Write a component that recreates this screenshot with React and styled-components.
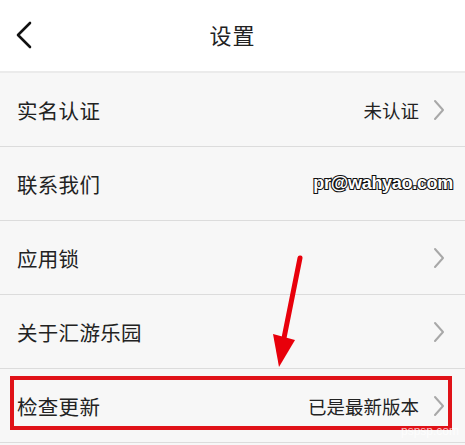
import React from 'react'
import styled, { createGlobalStyle } from 'styled-components'

const GlobalStyle = createGlobalStyle`
  html, body {
    margin: 0;
    padding: 0;
    background: #f7f7f7;
  }
  body {
    font-family: 'Noto Sans CJK SC', 'Noto Sans', sans-serif;
    color: #222;
  }
`

const Page = styled.div`
  position: relative;
  width: 465px;
  height: 445px;
  overflow: hidden;
  background: #f7f7f7;
`

const Header = styled.div`
  height: 71px;
  background: #fff;
  border-bottom: 2px solid #ebebeb;
  display: flex;
  align-items: center;
  justify-content: center;
  position: relative;
`

const BackButton = styled.div`
  position: absolute;
  left: 14px;
  top: 21px;
  width: 22px;
  height: 28px;
`

const Title = styled.h1`
  margin: 0 0 3px;
  font-size: 22px;
  font-weight: 400;
  letter-spacing: 1px;
  color: #222;
`

const List = styled.div`
  display: flex;
  flex-direction: column;
`

const Row = styled.div`
  position: relative;
  height: 73px;
  border-bottom: 1px solid #dcdcdc;
  display: flex;
  align-items: center;
  justify-content: space-between;
  padding: 0 20px 0 17px;
  background: #f7f7f7;
`

const Label = styled.span`
  font-size: 20.5px;
  letter-spacing: 0.3px;
  color: #222;
`

const Right = styled.div`
  display: flex;
  align-items: center;
  gap: 14px;
`

const Value = styled.span`
  font-size: 18.5px;
  color: #222;
`

const Email = styled.span`
  font-family: 'Liberation Sans', Arial, sans-serif;
  font-weight: 700;
  font-size: 18px;
  color: #fff;
  -webkit-text-stroke: 2.2px #111;
  paint-order: stroke fill;
  margin-right: -8px;
  letter-spacing: -0.3px;
`

const Highlight = styled.div`
  position: absolute;
  left: 10px;
  right: 13px;
  top: 7px;
  bottom: 12px;
  border: 4px solid #e01218;
  pointer-events: none;
`

const Watermark = styled.div`
  position: absolute;
  right: 6px;
  bottom: 4px;
  width: 140px;
  height: 52px;
  color: rgba(255, 255, 255, 0.75);
  font-family: 'Liberation Sans', Arial, sans-serif;
  font-size: 12px;
  display: flex;
  align-items: flex-end;
  justify-content: flex-end;
`

const Arrow = styled.svg`
  position: absolute;
  left: 0;
  top: 0;
  pointer-events: none;
`

const Chevron = () => (
  <svg width="12" height="22" viewBox="0 0 12 22">
    <path d="M2 2 L10 11 L2 20" fill="none" stroke="#a8a8a8" strokeWidth="2" strokeLinecap="round" strokeLinejoin="round" />
  </svg>
)

const rows = [
  { label: '实名认证', value: '未认证', arrow: true },
  { label: '联系我们', email: 'pr@wahyao.com' },
  { label: '应用锁', arrow: true },
  { label: '关于汇游乐园', arrow: true },
  { label: '检查更新', value: '已是最新版本', arrow: true, highlight: true },
]

export default function App () {
  return (
    <Page>
      <GlobalStyle />
      <Header>
        <BackButton>
          <svg width="22" height="28" viewBox="0 0 22 28">
            <path d="M16 2 L4 14 L16 26" fill="none" stroke="#111" strokeWidth="2.6" strokeLinecap="round" strokeLinejoin="round" />
          </svg>
        </BackButton>
        <Title>设置</Title>
      </Header>
      <List>
        {rows.map(item => (
          <Row key={item.label}>
            <Label>{item.label}</Label>
            <Right>
              {item.value && <Value>{item.value}</Value>}
              {item.email && <Email>{item.email}</Email>}
              {item.arrow && <Chevron />}
            </Right>
            {item.highlight && <Highlight />}
            {item.highlight && <Watermark>pspsp.com</Watermark>}
          </Row>
        ))}
      </List>
      <Arrow width="465" height="445" viewBox="0 0 465 445">
        <path d="M300 258 L284 338" fill="none" stroke="#e8000b" strokeWidth="5" strokeLinecap="round" />
        <path d="M273 334 L295 340 L279 367 Z" fill="#e8000b" />
      </Arrow>
    </Page>
  )
}
